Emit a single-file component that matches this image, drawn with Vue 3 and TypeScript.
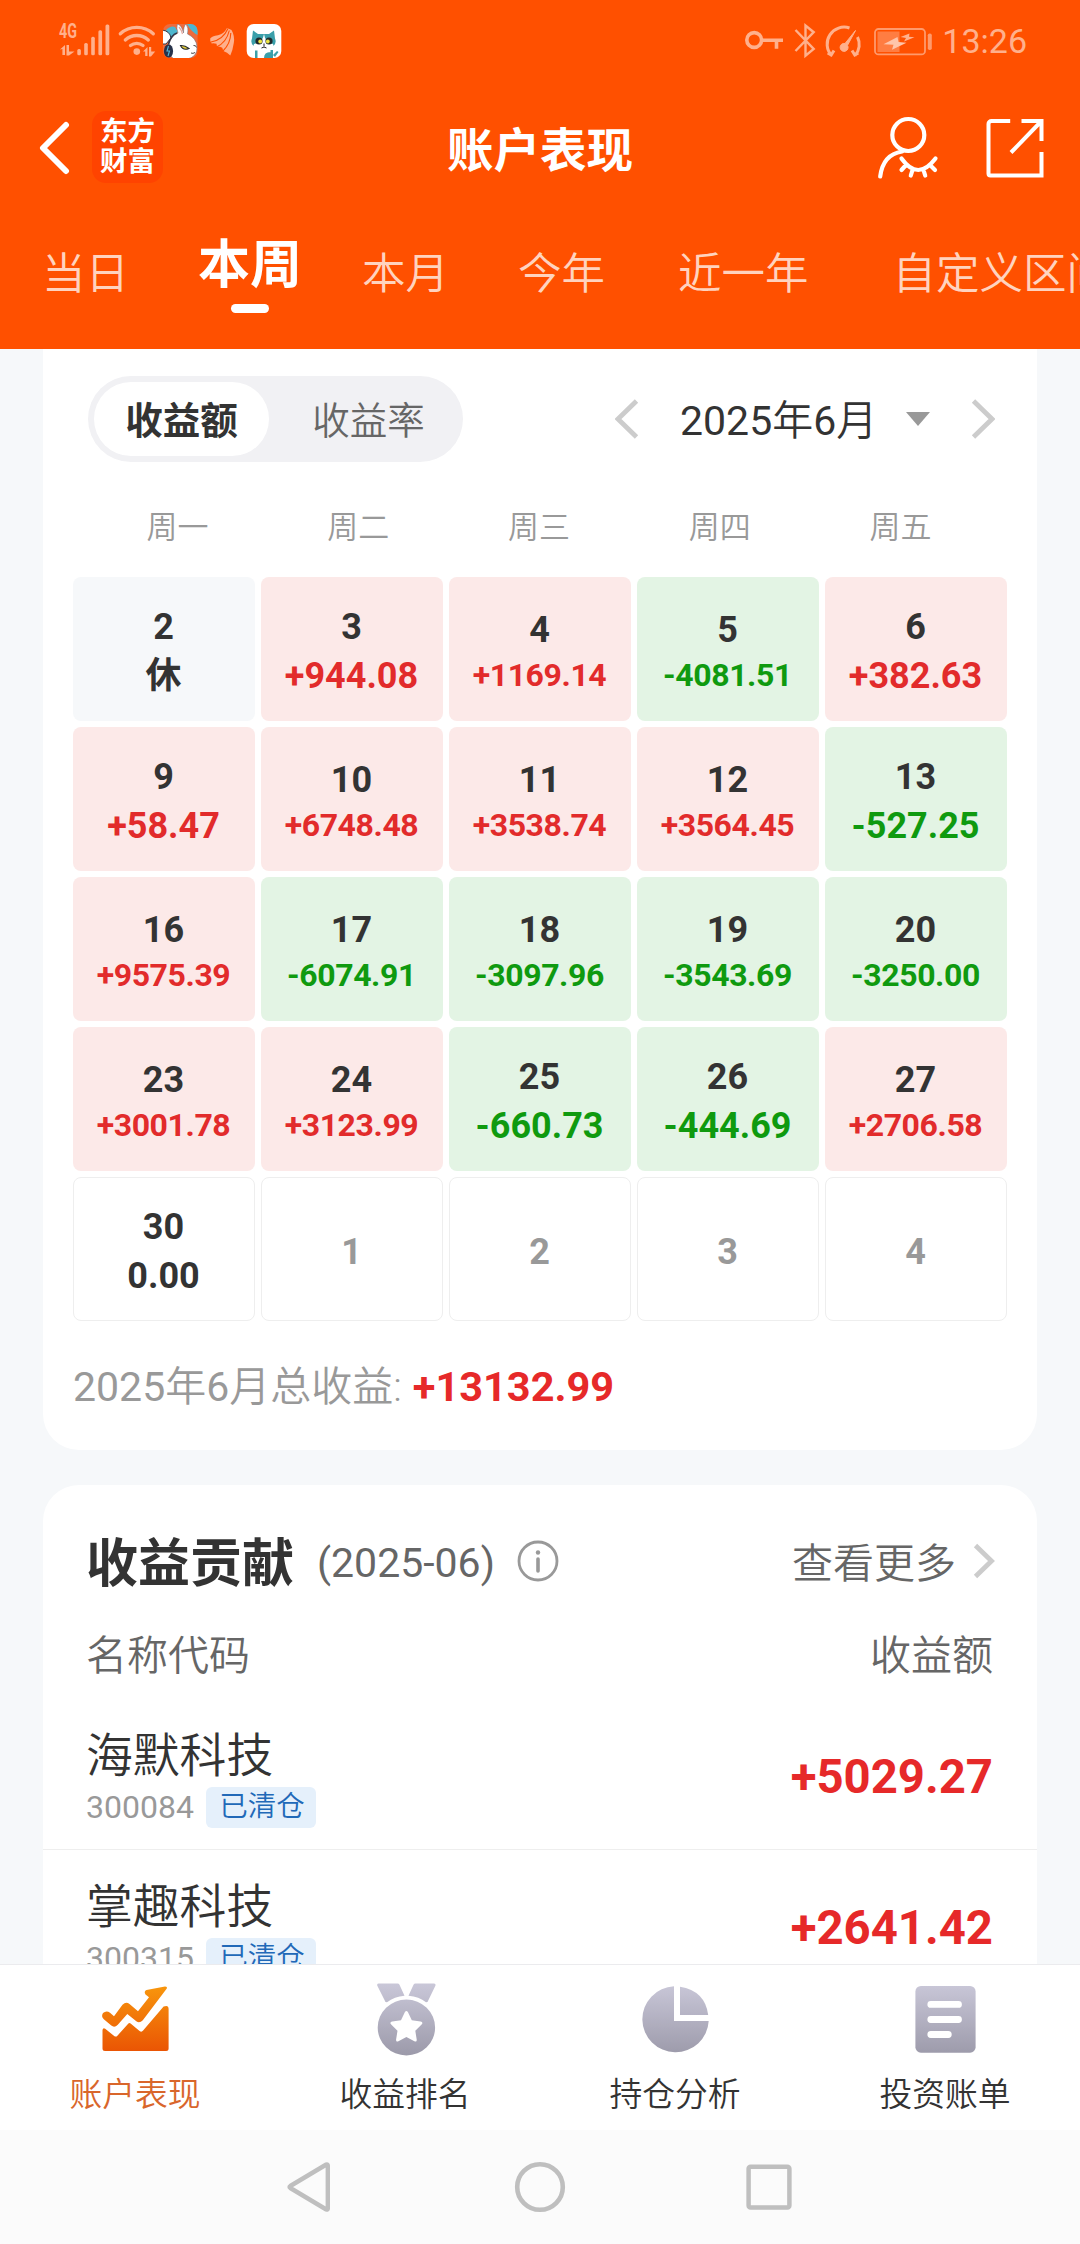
<script setup lang="ts">
interface DayCell {
  day: string
  value?: string
  kind: 'rest' | 'up' | 'down' | 'flat' | 'next'
}

const tabs: string[] = ['当日', '本周', '本月', '今年', '近一年', '自定义区间']
const activeTab = '本周'

const weekdays: string[] = ['周一', '周二', '周三', '周四', '周五']

const toCell = (day: number, value: string): DayCell => ({
  day: String(day),
  value,
  kind: value.startsWith('+') ? 'up' : 'down',
})

const days: DayCell[] = [
  { day: '2', value: '休', kind: 'rest' },
  toCell(3, '+944.08'),
  toCell(4, '+1169.14'),
  toCell(5, '-4081.51'),
  toCell(6, '+382.63'),
  toCell(9, '+58.47'),
  toCell(10, '+6748.48'),
  toCell(11, '+3538.74'),
  toCell(12, '+3564.45'),
  toCell(13, '-527.25'),
  toCell(16, '+9575.39'),
  toCell(17, '-6074.91'),
  toCell(18, '-3097.96'),
  toCell(19, '-3543.69'),
  toCell(20, '-3250.00'),
  toCell(23, '+3001.78'),
  toCell(24, '+3123.99'),
  toCell(25, '-660.73'),
  toCell(26, '-444.69'),
  toCell(27, '+2706.58'),
  { day: '30', value: '0.00', kind: 'flat' },
  { day: '1', kind: 'next' },
  { day: '2', kind: 'next' },
  { day: '3', kind: 'next' },
  { day: '4', kind: 'next' },
]

const isLong = (cell: DayCell): boolean => (cell.value?.length ?? 0) > 7

const stocks = [
  { name: '海默科技', code: '300084', tag: '已清仓', amount: '+5029.27' },
  { name: '掌趣科技', code: '300315', tag: '已清仓', amount: '+2641.42' },
]
</script>

<template>
  <div class="screen">
    <header class="header">
      <div class="status">
        <svg class="status-left" width="240" height="40" viewBox="50 20 240 40">
          <g fill="#ffb08c">
            <text x="59" y="38.2" font-size="19.5" font-weight="700" textLength="18" lengthAdjust="spacingAndGlyphs">4G</text>
            <path d="M60 49.500 65 45v10h-2.600v-6zM66.500 45h2.500v6.500h5.500L69 55.500h-2.500z" />
            <rect x="77.300" y="49" width="3.600" height="6.200" rx="1.500" />
            <rect x="84.200" y="43" width="3.600" height="12.200" rx="1.500" />
            <rect x="91.200" y="36.700" width="3.600" height="18.500" rx="1.500" />
            <rect x="98.400" y="30.300" width="3.700" height="24.900" rx="1.500" />
            <rect x="105.500" y="24.500" width="3.800" height="30.700" rx="1.500" />
            <circle cx="136.800" cy="51.600" r="3.300" />
            <path d="M143 51.500 147.500 47v9h-2.300v-4.500zM149 47h2.200v4.500h4L151 56.500h-2z" />
            <path d="M210.200 38.500q1.500-2.500 7.800-3.300 6-1.200 9-7.200l4.500 2q3.500 6 2.300 13-1 7-3.500 12.500-3-3.500-7-4.500l-1-3.200q-2.500-1.300-5.300-1.200l-.5-2.800q-2.500-.8-4.800-.3-2-2.500-1.500-5z" />
          </g>
          <path d="M211 42q12-2 17-13.500M216.500 47q10-4.500 12.800-16.500M223 51q7.500-7.500 7.800-18" fill="none" stroke="#ff5000" stroke-width="1.100" />
          <g fill="none" stroke="#ffb08c" stroke-width="3.300" stroke-linecap="round">
            <path d="M120.300 33.800a24.500 24.500 0 0 1 33 0" />
            <path d="M125.300 40a17 17 0 0 1 23 0" />
            <path d="M130.500 45.500a10 10 0 0 1 12.500 0" />
          </g>
          <clipPath id="rabbit"><rect x="163" y="24" width="34.600" height="34" rx="7" /></clipPath>
          <g clip-path="url(#rabbit)">
            <rect x="163" y="24" width="35" height="34" fill="#ee6b3d" />
            <path d="M166 30q5-5 9-3l3 5-8 6zM187 24h11v11q-6-2-11-11z" fill="#4db7cf" />
            <path d="M162 30q8 1 9 8l-5 6h-4z" fill="#fff" stroke="#33384a" stroke-width="1" />
            <path d="M177.500 24q4 1 6 9 0-7 2.500-9 3 4 1.500 10 9 4 9.500 13 .5 10-10 12h-13q-7-5-5-15 2-8 9-11-2-5-.5-9z" fill="#fff" stroke="#6b6f7c" stroke-width=".5" />
            <path d="M179 27q2.500 3 3.500 7" fill="none" stroke="#e7a9a0" stroke-width="1.200" />
            <path d="M168.500 44q2.500-9 8.500-11" fill="none" stroke="#30384b" stroke-width="1.400" />
            <ellipse cx="168.500" cy="51" rx="4.600" ry="6.700" fill="#27324a" />
            <path d="m168.500 46-1.500 5h2.500l-1.500 5" stroke="#55b8d8" stroke-width="1.100" fill="none" />
            <path d="M180.500 45.500q4-.5 8.500 3-6 2.500-8.500-3z" fill="#e5cf3b" stroke="#252b31" stroke-width="1.100" />
            <path d="M193.500 45.500q2.500-.5 3 2M191 53q2 1 4-.500" stroke="#333" stroke-width=".9" fill="none" />
          </g>
          <rect x="246.700" y="24" width="34.600" height="34" rx="7" fill="#fff" />
          <path d="M253 30.500 258 34h11l5-3.500 1 8q2 5-2 8l-5 2h-9l-5-2q-4-3-2-8z" fill="#3a9faa" />
          <path d="M264 34q1 8 9 10l1 3q-4 4-10 4t-11-4l1-3q9-2 10-10z" fill="#fff" />
          <circle cx="259" cy="41" r="3.600" fill="#20292c" />
          <circle cx="269" cy="41" r="3.600" fill="#20292c" />
          <circle cx="260.200" cy="41.500" r="1.900" fill="#ece446" />
          <circle cx="267.800" cy="41.500" r="1.900" fill="#ece446" />
          <path d="M264 43.500v3m-2.500 1.500q2.500-2 5 0" stroke="#222" stroke-width="1" fill="none" />
          <path d="M255 50.500h2.500v7.500h-2.500zM270.500 50h2.500v8h-2.500zM264 58q0-6 6.500-6v6zM273 55l4-4 1.500 1-3.500 5z" fill="#3a9faa" />
        </svg>
        <div class="status-right">
          <svg width="190" height="40" viewBox="744 20 190 40">
            <g fill="none" stroke="#ffb08c" stroke-width="3.600">
              <circle cx="754.200" cy="40" r="7.400" />
              <path d="M761.500 40.300h21.500M776.500 40v8.800" />
              <path d="m795.500 30 18.200 19-8.200 6.700V25.500l8.200 6.700L795.500 51" stroke-width="2.400" />
              <path d="M831.500 55.500A17 17 0 0 1 849.500 28M857.500 37a16.500 16.500 0 0 1-2.500 18.500M852 50.500l2.800 4.500 3.500-2M834 50.500l-2.800 4.500-3.500-2" stroke-width="3" />
            </g>
            <path d="m855.500 30.500-10.500 13a4 4 0 1 0 2.500 1.800z" fill="#ffb08c" stroke="#ffb08c" stroke-width="1" />
            <rect x="875" y="29" width="50" height="25.400" rx="3.500" fill="none" stroke="#ff9a6c" stroke-width="1.800" />
            <rect x="877.500" y="31.500" width="22" height="20.500" fill="#ff7d42" />
            <path d="m897.500 37-14 7.300 10 .5-1.500 5 14.500-7-8-.8z" fill="#ffc5aa" />
            <path d="m909.500 33.500-9 3.500 5.500 1-2 3.500 10.500-4.200-5.500-.6z" fill="#ffb08c" />
            <rect x="927.800" y="33.500" width="4" height="16.500" rx="1.800" fill="#ff9a6c" />
          </svg>
          <span class="time">13:26</span>
        </div>
      </div>

      <div class="titlebar">
        <div class="title-left">
          <svg width="32" height="56" viewBox="0 0 32 56">
            <path d="M28 5 5 28l23 23" fill="none" stroke="#fff" stroke-width="6" stroke-linecap="round" stroke-linejoin="round" />
          </svg>
          <div class="logo"><span>东方</span><span>财富</span></div>
        </div>
        <h1>账户表现</h1>
        <div class="title-right">
          <svg width="62" height="64" viewBox="878 115 62 64" fill="none" stroke="#fff" stroke-width="4.200" stroke-linecap="round">
            <circle cx="909.300" cy="134" r="16" />
            <path d="M903 150.500q-19 3-21.800 25M902.500 157.500q16.500 23 34 0M907 164l-4.500 5M913.500 169l-1.700 5.500M924.500 169l1.700 5.500M931 164l5 5" />
          </svg>
          <svg width="58" height="60" viewBox="986.500 117 58 60" fill="none" stroke="#fff" stroke-width="4">
            <path d="M1010.700 120h-18.700a3 3 0 0 0-3 3v49.500a2 2 0 0 0 2 2h51v-23.500M1022 120h20v20M1042 120l-30.500 31.500" />
          </svg>
        </div>
      </div>

      <nav class="tabs">
        <span v-for="tab in tabs" :key="tab" class="tab" :class="{ active: tab === activeTab }">{{ tab }}</span>
      </nav>
    </header>

    <main class="content">
      <section class="card calendar">
        <div class="toolbar">
          <div class="segmented">
            <span class="on">收益额</span>
            <span class="off">收益率</span>
          </div>
          <div class="month">
            <svg width="24" height="40" viewBox="0 0 24 40"><path d="M21.500 2 3 20l18.500 18" fill="none" stroke="#ccc" stroke-width="4.800" /></svg>
            <span class="month-name"><span class="num">2025</span>年<span class="num">6</span>月</span>
            <i class="caret"></i>
            <svg width="24" height="40" viewBox="0 0 24 40"><path d="m2.500 2 18.500 18-18.500 18" fill="none" stroke="#ccc" stroke-width="4.800" /></svg>
          </div>
        </div>
        <div class="weekdays"><span v-for="w in weekdays" :key="w">{{ w }}</span></div>
        <div class="grid">
          <div v-for="(cell, i) in days" :key="i" class="cell" :class="[cell.kind, { long: isLong(cell) }]">
            <span class="day">{{ cell.day }}</span>
            <span v-if="cell.value" class="value">{{ cell.value }}</span>
          </div>
        </div>
        <div class="total"><span class="num">2025</span>年<span class="num">6</span>月总收益: <b>+13132.99</b></div>
      </section>

      <section class="card contribution">
        <div class="card-head">
          <h2>收益贡献</h2>
          <span class="period">(2025-06)</span>
          <svg class="info" width="42" height="42" viewBox="0 0 42 42">
            <circle cx="21" cy="21" r="19" fill="none" stroke="#999" stroke-width="2.800" />
            <circle cx="21" cy="12.500" r="2.200" fill="#999" />
            <path d="M21 19v12" stroke="#999" stroke-width="3.600" stroke-linecap="round" />
          </svg>
          <span class="more">查看更多</span>
          <svg width="22" height="36" viewBox="0 0 22 36"><path d="m2.500 2.500 16 15.500-16 15.500" fill="none" stroke="#ccc" stroke-width="4.800" /></svg>
        </div>
        <div class="columns"><span>名称代码</span><span>收益额</span></div>
        <div v-for="s in stocks" :key="s.code" class="stock">
          <div class="stock-info">
            <span class="stock-name">{{ s.name }}</span>
            <div class="stock-sub">
              <span class="code">{{ s.code }}</span>
              <span class="tag">{{ s.tag }}</span>
            </div>
          </div>
          <span class="amount">{{ s.amount }}</span>
        </div>
      </section>
    </main>

    <footer class="tabbar">
      <div class="item current">
        <svg width="74" height="76" viewBox="98 1981 74 76">
          <defs>
            <linearGradient id="orange" gradientUnits="userSpaceOnUse" x1="0" y1="1986" x2="0" y2="2051">
              <stop offset="0" stop-color="#f8960c" /><stop offset="1" stop-color="#ea5504" />
            </linearGradient>
            <linearGradient id="grey" gradientUnits="userSpaceOnUse" x1="0" y1="1984" x2="0" y2="2055">
              <stop offset="0" stop-color="#c9c7d8" /><stop offset="1" stop-color="#9c9aaa" />
            </linearGradient>
          </defs>
          <path fill="url(#orange)" d="M102.500 2030q.5-2.500 2.700-1.200l9 7.200q1.800 1.300 3.200-.3l11-12.200q1-1 2.200 0l9 7.500q2 1.500 3.500-.5l20.500-24q5-2 5 2.500v39.500q0 2.500-2.500 2.500H105q-2.500 0-2.500-2.500z" />
          <path fill="url(#orange)" d="M103 2013q3.500-3 7-.2l4 3.500 8.500-11.500q3.500-3.500 7-.8l8.500 7.200 11-14-3.500-2.700q-2-3 1-4.500l18.500-3.600q2.500 0 1.800 2.200l-24 31.700q-3.300 3.300-6.500 1l-9-7.300-9.500 10.800q-3.300 3.300-6.500.8l-7.500-6.300q-3-3-.8-6.300z" />
        </svg>
        <span>账户表现</span>
      </div>
      <div class="item">
        <svg width="74" height="76" viewBox="368 1981 74 76">
          <g fill="url(#grey)">
            <path d="M378.500 1983.500h19q1.300 0 2 1.200l5 11q-10 .8-17.500 6.500l-1.500-.2-8.300-16.500q-.5-2 1.300-2zM415.500 1983.500h18.500q2 0 1.500 2l-8 16.500-1.500.2q-7-5.700-17.500-6.500l5-11q.7-1.200 2-1.200z" />
            <path fill-rule="evenodd" d="M406.400 1999.500a28.700 28 0 1 1 0 56 28.700 28 0 1 1 0-56zm-1.600 12.700-3.800 8-8.800 1.300q-3 .8-1 3l6.300 6.300-1.400 8.600q-.3 3 2.300 1.800l8-4.200 8 4.200q2.600 1.200 2.300-1.800l-1.400-8.600 6.300-6.300q2-2.200-1-3l-8.800-1.300-3.800-8q-1.600-2.500-3.200 0z" />
          </g>
        </svg>
        <span>收益排名</span>
      </div>
      <div class="item">
        <svg width="74" height="76" viewBox="638 1981 74 76">
          <path fill="url(#grey)" d="M674 1986.300V2021h34.700a33.200 33 0 1 1-34.700-34.700z" />
          <path fill="url(#grey)" d="M680 1986.800q25 4 28.200 28.200H680z" />
        </svg>
        <span>持仓分析</span>
      </div>
      <div class="item">
        <svg width="74" height="76" viewBox="908 1981 74 76">
          <rect x="915.400" y="1986" width="60.200" height="66.700" rx="5.500" fill="url(#grey)" />
          <path d="M930.800 2004.400h27.700M930.800 2019.500h27.700M930.800 2034.500h17.500" stroke="#fff" stroke-width="6.800" stroke-linecap="round" />
        </svg>
        <span>投资账单</span>
      </div>
    </footer>

    <div class="sysbar">
      <svg width="46" height="54" viewBox="285 2160 46 54"><path d="M327.800 2165.500v43q0 1.500-1.500 1l-36-21.500q-1.500-1 0-2l36-21.500q1.500-.5 1.500 1z" fill="none" stroke="#bfbfbf" stroke-width="4.400" stroke-linejoin="round" /></svg>
      <svg width="54" height="54" viewBox="0 0 54 54"><circle cx="27" cy="27" r="22.800" fill="none" stroke="#bfbfbf" stroke-width="4.600" /></svg>
      <svg width="48" height="48" viewBox="0 0 48 48"><rect x="3.600" y="3.800" width="40.800" height="40.600" rx="2" fill="none" stroke="#bfbfbf" stroke-width="4.500" /></svg>
    </div>
  </div>
</template>

<style>
body {
  margin: 0;
  background: #f6f8fa;
}
</style>

<style scoped>
.screen {
  width: 1080px;
  height: 2244px;
  display: flex;
  flex-direction: column;
  overflow: hidden;
  background: #f6f8fa;
  color: #333;
  font-family: Roboto, "Noto Sans CJK SC", sans-serif;
  font-weight: 350;
}
.screen * {
  box-sizing: border-box;
}
svg {
  display: block;
  flex: none;
}
svg text {
  font-family: Roboto, sans-serif;
}
.num {
  font-weight: 400;
}
.header {
  height: 349px;
  flex: none;
  background: #ff5000;
  color: #fff;
}
.status {
  height: 80px;
  padding: 20px 53px 0 50px;
  display: flex;
  justify-content: space-between;
}
.status-right {
  display: flex;
  height: 40px;
  gap: 8px;
}
.time {
  font-size: 34px;
  line-height: 42px;
  font-weight: 400;
  color: #ffb08c;
}
.titlebar {
  height: 136px;
  display: grid;
  grid-template-columns: 1fr auto 1fr;
  align-items: center;
  padding: 0 36px 0 38px;
}
.title-left {
  display: flex;
  align-items: center;
  gap: 22px;
}
.logo {
  width: 71px;
  height: 72px;
  margin-top: -2px;
  border-radius: 14px;
  background: #ff4300;
  display: flex;
  flex-direction: column;
  align-items: center;
  justify-content: center;
}
.logo span {
  font-size: 27.500px;
  line-height: 30px;
  font-weight: 700;
}
h1 {
  margin: 6px 2px 0 0;
  font-size: 46.500px;
  line-height: 60px;
  font-weight: 700;
}
.title-right {
  display: flex;
  justify-content: flex-end;
  align-items: center;
  gap: 47px;
}
.tabs {
  height: 133px;
  padding-left: 42px;
  display: flex;
  white-space: nowrap;
}
.tab {
  flex: none;
  font-size: 43.500px;
  line-height: 60px;
  padding-top: 29px;
  color: #ffd3bf;
}
.tab + .tab {
  margin-left: 69px;
}
.tab.active {
  display: flex;
  flex-direction: column;
  align-items: center;
  font-size: 52px;
  font-weight: 700;
  padding-top: 20px;
  color: #fff;
}
.tab.active::after {
  content: "";
  width: 38px;
  height: 9px;
  margin-top: 8px;
  border-radius: 5px;
  background: #fff;
}
.tab:nth-child(3) {
  margin-left: 60px;
}
.tab:nth-child(5) {
  margin-left: 73px;
}
.tab:nth-child(6) {
  margin-left: 84px;
}
.content {
  height: 1615px;
  flex: none;
  overflow: hidden;
  padding: 0 43px;
}
.card {
  background: #fff;
}
.calendar {
  height: 1101px;
  border-radius: 0 0 36px 36px;
  padding: 27px 30px 0;
}
.toolbar {
  display: flex;
  justify-content: space-between;
  align-items: center;
  padding: 0 12px 0 15px;
}
.segmented {
  width: 375px;
  height: 86px;
  padding: 6px;
  display: flex;
  border-radius: 43px;
  background: #f1f1f4;
  font-size: 37.500px;
  line-height: 78px;
  text-align: center;
}
.on {
  width: 175px;
  height: 74px;
  border-radius: 37px;
  background: #fff;
  font-weight: 700;
}
.off {
  flex: 1;
  padding-left: 11px;
  color: #666;
}
.month {
  display: flex;
  align-items: center;
}
.month-name {
  margin-left: 41px;
  width: 226px;
  font-size: 41px;
  line-height: 60px;
  padding-top: 4px;
}
.caret {
  border: 12px solid transparent;
  border-top: 14px solid #999;
  border-bottom: 0;
  margin-right: 41px;
}
.weekdays {
  display: flex;
  margin-top: 44px;
  padding: 0 16px 0 14px;
  font-size: 31px;
  line-height: 44px;
  color: #999;
  text-align: center;
}
.weekdays span {
  flex: 1;
}
.grid {
  margin-top: 27px;
  display: grid;
  grid-template-columns: repeat(5, 182px);
  grid-auto-rows: 144px;
  gap: 6px;
}
.cell {
  padding: 6px 1px 0 0;
  border-radius: 8px;
  display: flex;
  flex-direction: column;
  align-items: center;
  justify-content: center;
  font-size: 36px;
  line-height: 49px;
  font-weight: 700;
}
.cell.long {
  padding-top: 4px;
}
.long .value {
  font-size: 32px;
  line-height: 40px;
  letter-spacing: -0.4px;
  margin-bottom: 1px;
}
.rest {
  background: #f6f8fa;
}
.up {
  background: #fce9e8;
}
.up .value {
  color: #e22b2b;
}
.down {
  background: #e3f4e4;
}
.down .value {
  color: #0f9a0f;
}
.flat,
.next {
  border: 1px solid #eee;
}
.next {
  color: #999;
}
.total {
  margin-top: 35px;
  font-size: 41px;
  line-height: 62px;
  color: #999;
  white-space: nowrap;
}
.total b {
  margin-left: 1px;
  font-size: 41.500px;
  font-weight: 700;
  color: #e62929;
}
.contribution {
  margin-top: 35px;
  border-radius: 36px 36px 0 0;
}
.card-head {
  display: flex;
  align-items: center;
  height: 152px;
  padding: 0 42px 0 43px;
}
h2 {
  margin: 7px 0 0;
  font-size: 52px;
  line-height: 70px;
  font-weight: 700;
}
.period {
  margin: 4px 0 0 23px;
  font-size: 41px;
  font-weight: 400;
  color: #666;
}
.info {
  margin-left: 22px;
}
.more {
  margin: 6px 17px 0 auto;
  font-size: 41px;
  line-height: 60px;
  color: #666;
}
.columns {
  display: flex;
  justify-content: space-between;
  padding: 0 44px 0 43px;
  margin-top: -11px;
  font-size: 41px;
  line-height: 60px;
  color: #666;
}
.stock {
  height: 151px;
  display: flex;
  justify-content: space-between;
  align-items: center;
  padding: 0 44px 0 43px;
  border-bottom: 1px solid #eee;
}
.columns + .stock {
  margin-top: 13px;
}
.stock-info {
  padding-top: 6px;
}
.stock-name {
  display: block;
  font-size: 46.800px;
  line-height: 60px;
}
.stock-sub {
  display: flex;
  align-items: center;
  gap: 12px;
}
.code {
  font-size: 32px;
  line-height: 43px;
  font-weight: 400;
  color: #999;
}
.tag {
  width: 110px;
  height: 41px;
  border-radius: 6px;
  background: #e5f0fb;
  color: #2169b8;
  font-size: 28.500px;
  line-height: 40px;
  text-align: center;
  padding-left: 2px;
}
.amount {
  margin-top: 5px;
  font-size: 47.300px;
  line-height: 60px;
  font-weight: 700;
  color: #e62929;
}
.tabbar {
  height: 166px;
  flex: none;
  border-top: 1px solid #ebebee;
  background: #fff;
  display: flex;
}
.item {
  flex: 1;
  display: flex;
  flex-direction: column;
  align-items: center;
  padding-top: 16px;
  font-size: 32.800px;
  line-height: 44px;
}
.item span {
  margin-top: 16px;
}
.current {
  color: #d9662b;
}
.sysbar {
  height: 114px;
  flex: none;
  background: #fbfbfb;
  display: flex;
  align-items: center;
  padding-left: 285px;
  gap: 181px;
}
.sysbar svg:nth-child(2) {
  margin: 0 -3px 0 1px;
}
</style>
